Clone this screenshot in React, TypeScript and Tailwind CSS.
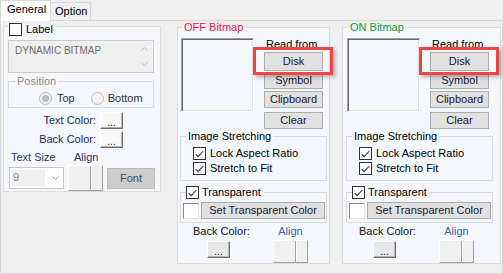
import type { ReactNode } from "react";

function Check({ checked = false }: { checked?: boolean }) {
  return (
    <span className="flex h-[13px] w-[13px] shrink-0 items-center justify-center border border-[#333333] bg-white">
      {checked && (
        <svg width="9" height="8" viewBox="0 0 9 8" fill="none">
          <path d="M0.7 4.1 3.2 6.6 8.3 1" stroke="#333333" strokeWidth="1.1" />
        </svg>
      )}
    </span>
  );
}

function Radio({ checked = false }: { checked?: boolean }) {
  return (
    <span className="flex h-[13px] w-[13px] shrink-0 items-center justify-center rounded-full border border-[#bcbcbc] bg-[#f4f4f4]">
      {checked && <span className="h-[7px] w-[7px] rounded-full bg-[#bcbcbc]" />}
    </span>
  );
}

function Btn({ children, className = "" }: { children: ReactNode; className?: string }) {
  return (
    <div
      className={
        "flex items-center justify-center border border-[#adadad] bg-[#e1e1e1] text-[#1b1533] " + className
      }
    >
      {children}
    </div>
  );
}

function Dots({ className = "" }: { className?: string }) {
  return (
    <div
      className={
        "flex h-[17px] w-[23px] items-end justify-center border border-t-white border-l-white border-r-[#6d6d6d] border-b-[#6d6d6d] pb-[2px] text-[10px] leading-[6px] text-[#1b1533] shadow-[inset_-1px_-1px_0_#b4b4b4] " +
        className
      }
    >
      ...
    </div>
  );
}

function AlignBtn({ className = "" }: { className?: string }) {
  return (
    <div
      className={
        "flex border border-t-white border-l-white border-r-[#a0a0a0] border-b-[#a0a0a0] bg-[#f0f0f0] " + className
      }
    >
      <div className="flex-1 border-r border-[#a0a0a0]" />
      <div className="w-[11px] border-l border-white" />
    </div>
  );
}

function BitmapGroup({
  title,
  titleColor,
  outer,
}: {
  title: string;
  titleColor: string;
  outer: string;
}) {
  return (
    <fieldset className={"h-[243px] min-w-0 border border-[#dcdcdc] bg-[#f4f7fc] " + outer}>
      <legend className={"ml-[1px] px-[2px] " + titleColor}>{title}</legend>

      <div className="mt-[4px] flex items-start">
        <div className="h-[74px] w-[73px] border border-t-[#a0a0a0] border-l-[#a0a0a0] border-r-white border-b-white shadow-[inset_1px_1px_0_#696969,inset_-1px_-1px_0_#e3e3e3]" />
        <div className="relative ml-[10px] flex w-[59px] flex-col">
          <span className="pl-[2px]">Read from</span>
          <Btn className="mt-[1px] h-[19px]">Disk</Btn>
          <Btn className="mt-[1px] h-[17px]">Symbol</Btn>
          <Btn className="mt-[2px] h-[17px]">Clipboard</Btn>
          <Btn className="mt-[4px] h-[17px]">Clear</Btn>
          <div className="absolute left-[-11px] top-[9px] h-[28px] w-[80px] border-[3px] border-[#ee4545] shadow-[2px_2px_4px_rgba(0,0,0,0.3)]" />
        </div>
      </div>

      <fieldset className="-ml-[1px] mt-[1px] w-[147px] min-w-0 border border-[#dcdcdc] pb-[5px]">
        <legend className="ml-[5px] px-[2px]">Image Stretching</legend>
        <div className="mt-[4px] flex items-center gap-[4px] pl-[12px]">
          <Check checked />
          <span>Lock Aspect Ratio</span>
        </div>
        <div className="mt-[2px] flex items-center gap-[4px] pl-[12px]">
          <Check checked />
          <span>Stretch to Fit</span>
        </div>
      </fieldset>

      <fieldset className="-ml-[1px] mt-[5px] w-[147px] min-w-0 border border-[#dcdcdc] pb-[3px]">
        <legend className="ml-[5px] flex items-center gap-[3px] pr-[2px]">
          <Check checked />
          <span>Transparent</span>
        </legend>
        <div className="mt-[3px] flex items-center">
          <div className="ml-[2px] h-[16px] w-[16px] border border-t-[#8a8a8a] border-l-[#8a8a8a] border-r-[#e3e3e3] border-b-[#e3e3e3] bg-white" />
          <Btn className="ml-[2px] h-[17px] w-[124px]">Set Transparent Color</Btn>
        </div>
      </fieldset>

      <div className="mt-[2px] flex">
        <div className="ml-[12px] w-[80px]">
          <div className="text-[#141414]">Back Color:</div>
          <Dots className="ml-[14px] mt-[3px] bg-[#e8e8e8]" />
        </div>
        <div className="w-[35px]">
          <div className="text-center text-[#3d5f9c]">Align</div>
          <AlignBtn className="mt-[2px] h-[23px]" />
        </div>
      </div>
    </fieldset>
  );
}

export default function App() {
  return (
    <div className="h-[274px] w-[503px] overflow-hidden bg-[#f0f0f0] font-['Liberation_Sans',Arial,sans-serif] text-[11px] leading-[13px] text-black">
      <div className="flex h-[21px]">
        <div className="w-[51px] border-x border-t border-[#d9d9d9] bg-white pl-[6px] pt-[2px]">General</div>
        <div className="mt-[2px] w-[40px] border-y border-r border-[#d9d9d9] bg-[#f0f0f0] pl-[4px] pt-[2px]">
          Option
        </div>
        <div className="flex-1 border-b border-[#d9d9d9]" />
      </div>

      <div className="flex h-[253px] items-start border-x border-b border-[#d9d9d9] pl-[2px]">
        <fieldset className="ml-0 mt-[2px] h-[169px] w-[158px] min-w-0 border border-[#dcdcdc] bg-[#f4f7fc] px-[4px]">
          <legend className="flex h-[6px] items-start gap-[4px] pl-[1px] pr-[3px]">
            <Check />
            <span>Label</span>
          </legend>

          <div className="mt-[11px] flex h-[33px] w-[146px] border border-[#cccccc] bg-[#f0f0f0]">
            <span className="flex-1 pl-[6px] pt-[3px] text-[10px] text-[#6d6d6d]">DYNAMIC BITMAP</span>
            <div className="flex w-[14px] flex-col items-center justify-between py-[6px] pr-[3px]">
              <svg width="7" height="4" viewBox="0 0 7 4" fill="none">
                <path d="M0.5 3.5 3.5 0.5 6.5 3.5" stroke="#c4c4c4" />
              </svg>
              <svg width="7" height="4" viewBox="0 0 7 4" fill="none">
                <path d="M0.5 0.5 3.5 3.5 6.5 0.5" stroke="#c4c4c4" />
              </svg>
            </div>
          </div>

          <fieldset className="mt-[2px] h-[33px] w-[146px] min-w-0 border border-[#dcdcdc]">
            <legend className="ml-[6px] px-[2px] text-[#8c8c8c]">Position</legend>
            <div className="mt-[4px] flex items-center pl-[30px] text-[#333333]">
              <Radio checked />
              <span className="ml-[5px]">Top</span>
              <span className="ml-[16px]">
                <Radio />
              </span>
              <span className="ml-[4px]">Bottom</span>
            </div>
          </fieldset>

          <div className="mt-[4px] flex items-center">
            <span className="w-[88px] text-right text-[#1f2d50]">Text Color:</span>
            <Dots className="ml-[4px] bg-[#f8f8f8]" />
          </div>
          <div className="mt-[2px] flex items-center">
            <span className="w-[88px] text-right text-[#1f2d50]">Back Color:</span>
            <Dots className="ml-[4px] bg-[#f8f8f8]" />
          </div>

          <div className="mt-[3px] flex pl-[3px] text-[#1f3764]">
            <span className="w-[63px]">Text Size</span>
            <span>Align</span>
          </div>

          <div className="mt-[1px] flex h-[26px] items-center">
            <div className="ml-[1px] flex h-[22px] w-[55px] items-center border border-[#c6c6c6] bg-white">
              <div className="ml-[2px] h-[16px] w-[33px] bg-[#f0f0f0] pl-[1px] pt-[1px] text-[#8a8a8a]">9</div>
              <svg className="ml-[7px]" width="7" height="4" viewBox="0 0 7 4" fill="none">
                <path d="M0.5 0.5 3.5 3.5 6.5 0.5" stroke="#a8a8a8" />
              </svg>
            </div>
            <AlignBtn className="ml-[4px] h-[26px] w-[35px]" />
            <div className="ml-[4px] flex h-[21px] w-[48px] items-center justify-center border border-[#bcbcbc] bg-[#cccccc] text-[#3b4a6b]">
              Font
            </div>
          </div>
        </fieldset>

        <BitmapGroup title="OFF Bitmap" titleColor="text-[#f0143c]" outer="ml-[16px] w-[153px] px-[3px]" />
        <BitmapGroup
          title="ON Bitmap"
          titleColor="text-[#12993a]"
          outer="ml-[12px] w-[159px] pl-[4px] pr-[3px]"
        />
      </div>
    </div>
  );
}
